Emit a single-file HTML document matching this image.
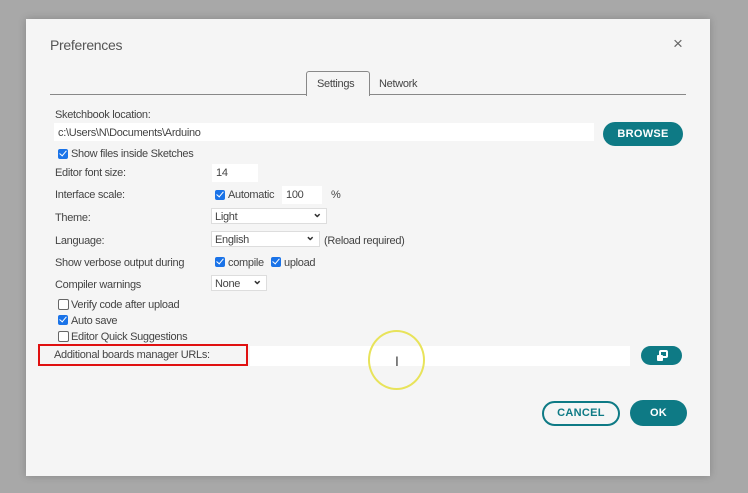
<!DOCTYPE html>
<html><head><style>
body{margin:0;width:748px;height:493px;background:#a8a8a8;position:relative;overflow:hidden;font-family:"Liberation Sans",sans-serif;font-size:11px;color:#444;letter-spacing:-0.3px}
.dlg{position:absolute;left:26px;top:19px;width:684px;height:457px;background:#f5f5f5;box-shadow:0 0 8px rgba(0,0,0,.2)}
.a{position:absolute;white-space:nowrap;margin-top:1px}
.in{position:absolute;background:#fff;height:18px}
.cb{position:absolute;width:10px;height:10px;border-radius:2px;background:#1a73e8;}
.cb:after{content:"";position:absolute;left:3px;top:0px;width:3px;height:6px;border:solid #fff;border-width:0 1.5px 1.5px 0;transform:rotate(40deg)}
.cu{position:absolute;width:9px;height:9px;border:1px solid #666;border-radius:2px;background:#fff}
.sel{position:absolute;background:#fff;border:1px solid #ddd;height:16px;line-height:16px;padding-left:3px;box-sizing:border-box}
.sel:after{content:"⌄";position:absolute;right:4px;top:-4px;font-size:12px;font-weight:bold;color:#333}
.btn{position:absolute;background:#0e7a85;color:#fff;font-weight:bold;border-radius:12px;text-align:center;font-size:11px;letter-spacing:0.3px}
</style></head><body>
<div class="dlg">
<div class="a" style="left:24px;top:17px;font-size:14px;color:#555">Preferences</div>
<div class="a" style="left:647px;top:14px;font-size:17px;color:#666">×</div>
<div style="position:absolute;left:24px;top:75px;width:636px;height:1px;background:#888"></div>
<div style="position:absolute;left:280px;top:52px;width:62px;height:24px;border:1px solid #888;border-bottom:none;border-radius:3px 3px 0 0;background:#f5f5f5"></div>
<div class="a" style="left:291px;top:58px">Settings</div>
<div class="a" style="left:353px;top:58px">Network</div>
<div class="a" style="left:29px;top:89px">Sketchbook location:</div>
<div class="in" style="left:28px;top:104px;width:540px"></div>
<div class="a" style="left:32px;top:107px">c:\Users\N\Documents\Arduino</div>
<div class="btn" style="left:577px;top:103px;width:80px;height:24px;line-height:24px">BROWSE</div>
<div class="cb" style="left:32px;top:130px"></div><div class="a" style="left:45px;top:128px">Show files inside Sketches</div>
<div class="a" style="left:29px;top:147px">Editor font size:</div>
<div class="in" style="left:186px;top:145px;width:46px"></div><div class="a" style="left:190px;top:147px">14</div>
<div class="a" style="left:29px;top:169px">Interface scale:</div>
<div class="cb" style="left:189px;top:171px"></div><div class="a" style="left:202px;top:169px">Automatic</div>
<div class="in" style="left:256px;top:167px;width:40px"></div><div class="a" style="left:260px;top:169px">100</div>
<div class="a" style="left:305px;top:169px">%</div>
<div class="a" style="left:29px;top:192px">Theme:</div>
<div class="sel" style="left:185px;top:189px;width:116px">Light</div>
<div class="a" style="left:29px;top:215px">Language:</div>
<div class="sel" style="left:185px;top:212px;width:109px">English</div>
<div class="a" style="left:298px;top:215px">(Reload required)</div>
<div class="a" style="left:29px;top:237px">Show verbose output during</div>
<div class="cb" style="left:189px;top:238px"></div><div class="a" style="left:202px;top:237px">compile</div>
<div class="cb" style="left:245px;top:238px"></div><div class="a" style="left:258px;top:237px">upload</div>
<div class="a" style="left:29px;top:259px">Compiler warnings</div>
<div class="sel" style="left:185px;top:256px;width:56px">None</div>
<div class="cu" style="left:32px;top:280px"></div><div class="a" style="left:45px;top:279px">Verify code after upload</div>
<div class="cb" style="left:32px;top:296px"></div><div class="a" style="left:45px;top:295px">Auto save</div>
<div class="cu" style="left:32px;top:312px"></div><div class="a" style="left:45px;top:311px">Editor Quick Suggestions</div>
<div class="in" style="left:224px;top:327px;width:380px;height:20px"></div>
<div style="position:absolute;left:12px;top:325px;width:206px;height:18px;border:2px solid #e01010;background:#f5f5f5"></div>
<div class="a" style="left:28px;top:329px">Additional boards manager URLs:</div>
<div class="btn" style="left:615px;top:327px;width:41px;height:19px;border-radius:10px"><svg width="14" height="12" viewBox="0 0 14 12" style="margin-top:4px"><rect x="5" y="1" width="7" height="6" rx="1" fill="none" stroke="#fff" stroke-width="2"/><rect x="2" y="5" width="6" height="6" rx="1" fill="#fff"/></svg></div>
<div style="position:absolute;left:342px;top:311px;width:57px;height:60px;border:2px solid #e8e35a;border-radius:50%;box-sizing:border-box"></div>
<div class="a" style="left:369px;top:333px;font-size:14px;color:#444">I</div>
<div style="position:absolute;left:516px;top:382px;width:74px;height:21px;border:2px solid #0e7a85;border-radius:13px;color:#0e7a85;font-weight:bold;text-align:center;line-height:21px;letter-spacing:0.3px">CANCEL</div>
<div class="btn" style="left:604px;top:381px;width:57px;height:26px;line-height:26px;border-radius:13px">OK</div>
</div>
</body></html>
